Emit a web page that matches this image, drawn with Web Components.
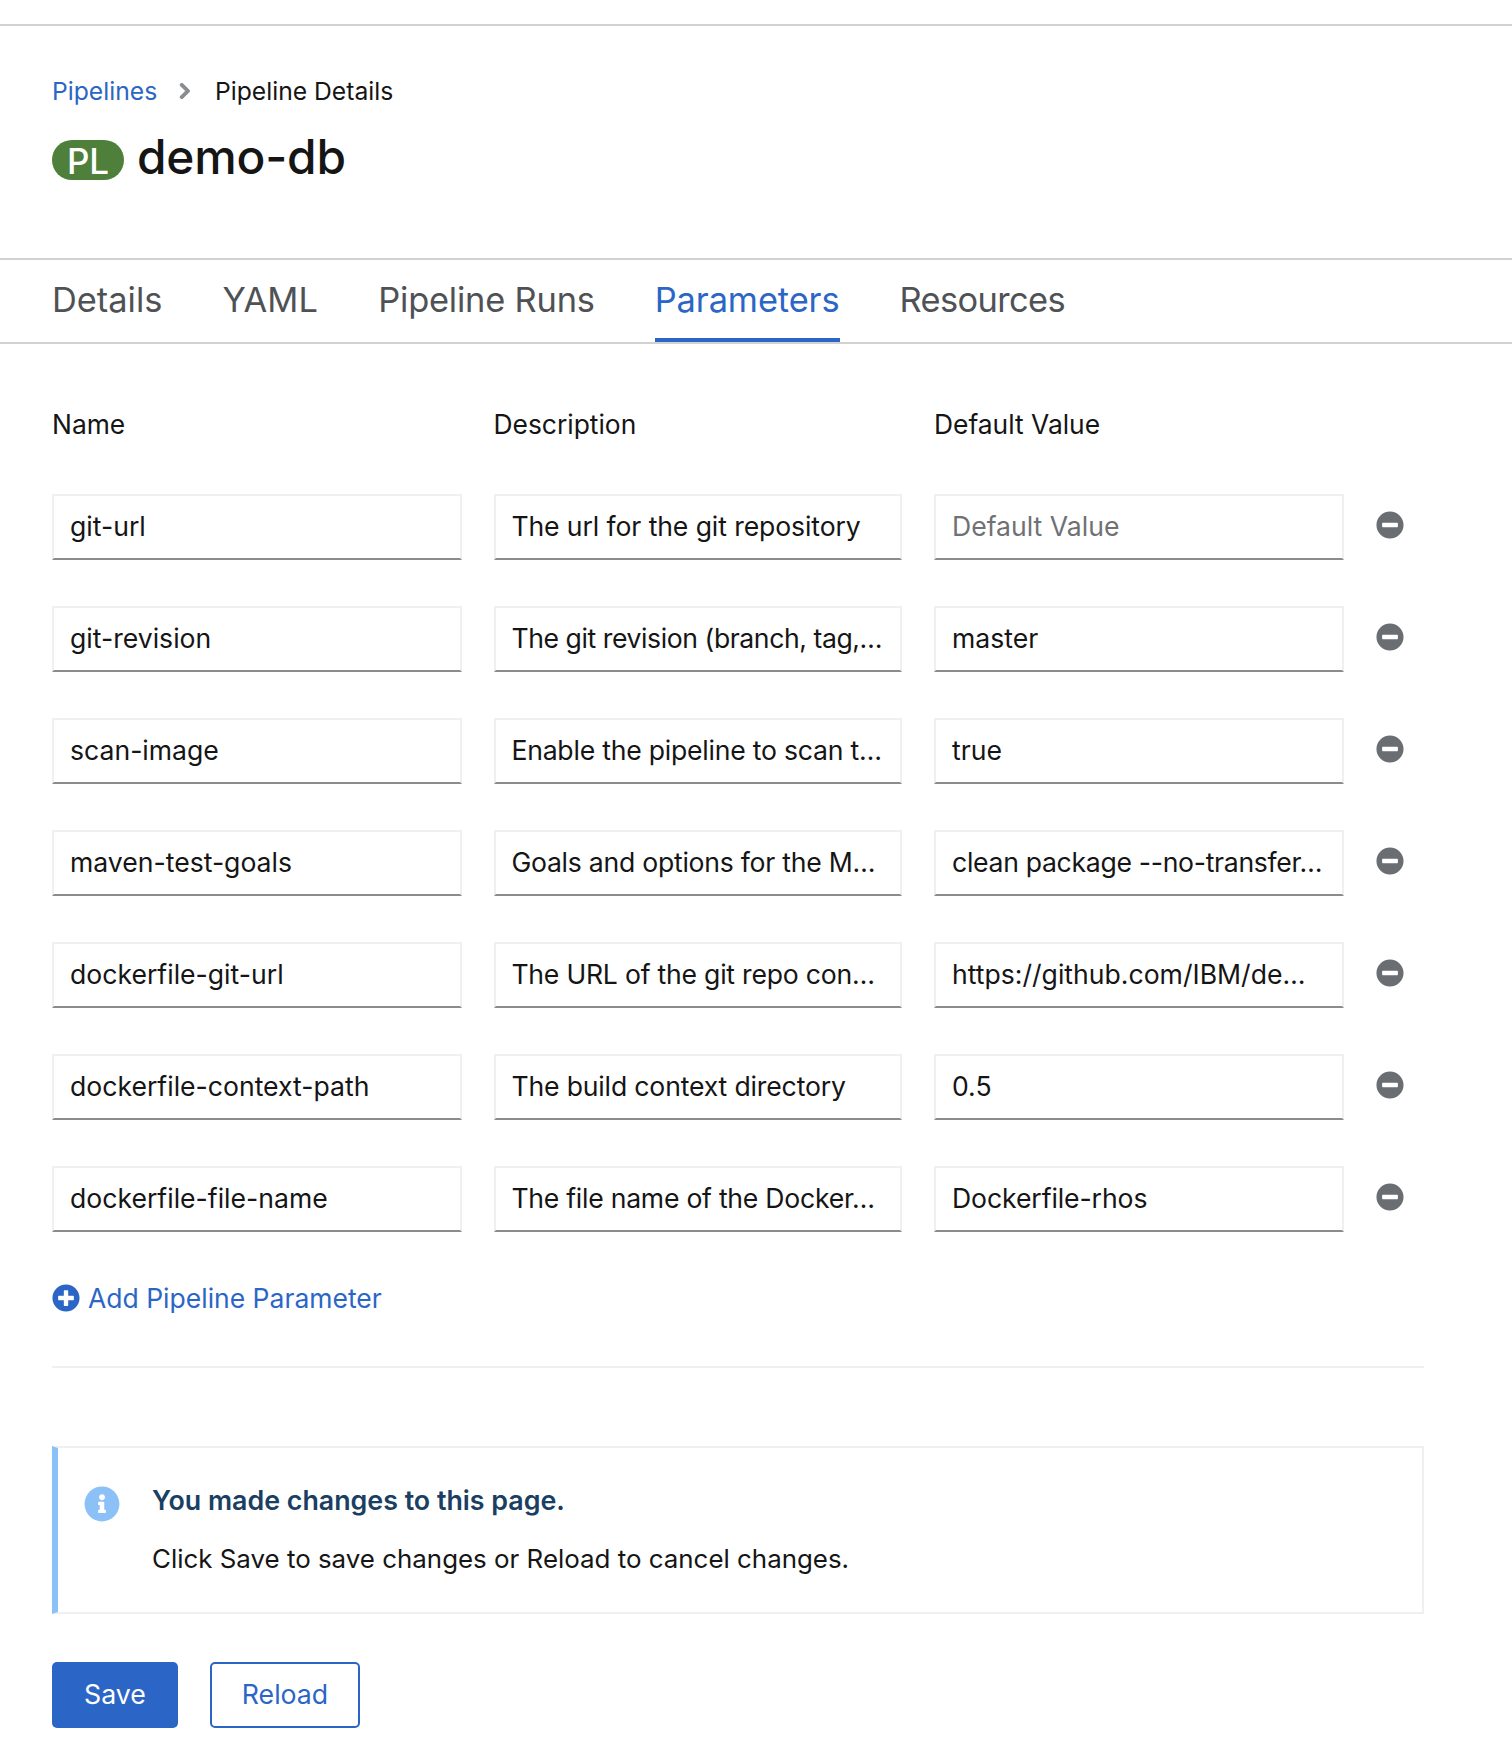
<!DOCTYPE html><html><head><meta charset="utf-8"><style>
html,body{margin:0;background:#fff}
body{font-family:Inter,"Liberation Sans",sans-serif;color:#151515;height:1756px;overflow:hidden}
</style></head><body>
<pipeline-page>
  <page-header slot="header" crumb="Pipelines" current="Pipeline Details" badge="PL" title="demo-db"></page-header>
  <tab-bar slot="tabs">
    <tab-item>Details</tab-item><tab-item style="--ls:.2px">YAML</tab-item><tab-item style="--ls:-.2px">Pipeline Runs</tab-item><tab-item active style="--ls:-.1px">Parameters</tab-item><tab-item style="--ls:-.6px">Resources</tab-item>
  </tab-bar>
  <param-form slot="form">
    <param-row name="git-url" desc="The url for the git repository" placeholder="Default Value" dls="-.1"></param-row>
    <param-row name="git-revision" desc="The git revision (branch, tag,…" value="master" dls="-.42"></param-row>
    <param-row name="scan-image" desc="Enable the pipeline to scan t…" value="true" dls="-.22"></param-row>
    <param-row name="maven-test-goals" desc="Goals and options for the M…" value="clean package --no-transfer…" dls="-.25" vls="-.3"></param-row>
    <param-row name="dockerfile-git-url" desc="The URL of the git repo con…" value="https://github.com/IBM/de…" dls="-.22"></param-row>
    <param-row name="dockerfile-context-path" desc="The build context directory" value="0.5" dls="-.16"></param-row>
    <param-row name="dockerfile-file-name" desc="The file name of the Docker…" value="Dockerfile-rhos" dls="-.25" vls="-.1"></param-row>
  </param-form>
  <info-alert slot="alert" heading="You made changes to this page.">Click Save to save changes or Reload to cancel changes.</info-alert>
  <action-button slot="actions" primary>Save</action-button>
  <action-button slot="actions">Reload</action-button>
</pipeline-page>
<script>
const P={
 minus:'M256 8C119 8 8 119 8 256s111 248 248 248 248-111 248-248S393 8 256 8zM124 296c-6.6 0-12-5.4-12-12v-56c0-6.6 5.4-12 12-12h264c6.6 0 12 5.4 12 12v56c0 6.6-5.4 12-12 12H124z',
 plus:'M256 8C119 8 8 119 8 256s111 248 248 248 248-111 248-248S393 8 256 8zm144 276c0 6.6-5.4 12-12 12h-92v92c0 6.6-5.4 12-12 12h-56c-6.6 0-12-5.4-12-12v-92h-92c-6.6 0-12-5.4-12-12v-56c0-6.6 5.4-12 12-12h92v-92c0-6.6 5.4-12 12-12h56c6.6 0 12 5.4 12 12v92h92c6.6 0 12 5.4 12 12v56z',
 info:'M256 8C119.043 8 8 119.083 8 256c0 136.997 111.043 248 248 248s248-111.003 248-248C504 119.083 392.957 8 256 8zm0 110c23.196 0 42 18.804 42 42s-18.804 42-42 42-42-18.804-42-42 18.804-42 42-42zm56 254c0 6.627-5.373 12-12 12h-88c-6.627 0-12-5.373-12-12v-24c0-6.627 5.373-12 12-12h12v-64h-12c-6.627 0-12-5.373-12-12v-24c0-6.627 5.373-12 12-12h64c6.627 0 12 5.373 12 12v100h12c6.627 0 12 5.373 12 12v24z'
};
const icon=(n,s,c)=>`<svg width="${s}" height="${s}" viewBox="0 0 512 512" fill="${c}" style="display:block;flex:none"><path d="${P[n]}"/></svg>`;
const COLS='410px 408px 410px 48px';
class Base extends HTMLElement{
  constructor(){super();this.attachShadow({mode:'open'})}
  connectedCallback(){this.shadowRoot.innerHTML=this.render()}
}
customElements.define('pipeline-page',class extends Base{render(){return `<style>
:host{display:block}
.top{height:24px;border-bottom:2px solid #d2d2d2}
.content{padding:0 88px 0 52px}
.actions{display:flex;gap:32px;margin-top:48px}
</style>
<div class="top"></div>
<slot name="header"></slot><slot name="tabs"></slot>
<div class="content"><slot name="form"></slot><slot name="alert"></slot><div class="actions"><slot name="actions"></slot></div></div>`}});
customElements.define('page-header',class extends Base{render(){const a=k=>this.getAttribute(k);return `<style>
:host{display:block;height:232px;box-sizing:border-box;padding:47px 52px 0}
nav{display:flex;align-items:center;height:36px;font-size:24.7px}
a{color:#2b66c6;text-decoration:none}
svg{margin:0 24px 0 22px;display:block;flex:none}
.t{display:flex;align-items:center;margin-top:19px;height:58px}
.b{width:72px;height:40px;box-sizing:border-box;padding-top:2px;border-radius:20px;background:#4e7f3b;color:#fff;font-size:35px;font-weight:500;display:flex;align-items:center;justify-content:center;margin-top:6px;margin-right:13px}
h1{margin:0;font-size:47.8px;font-weight:500;line-height:58px;letter-spacing:-.2px}
</style><nav><a>${a('crumb')}</a><svg width="11.7" height="18" viewBox="0 0 320 512" fill="#8a8d90"><path stroke="#8a8d90" stroke-width="30" stroke-linejoin="round" d="M285.476 272.971L91.132 467.314c-9.373 9.373-24.569 9.373-33.941 0l-22.667-22.667c-9.357-9.357-9.375-24.522-.04-33.901L188.505 256 34.484 101.255c-9.335-9.379-9.317-24.544.04-33.901l22.667-22.667c9.373-9.373 24.569-9.373 33.941 0L285.475 239.03c9.373 9.372 9.373 24.568.001 33.941z"/></svg><span>${a('current')}</span></nav>
<div class="t"><span class="b">${a('badge')}</span><h1>${a('title')}</h1></div>`}});
customElements.define('tab-bar',class extends Base{render(){return `<style>
:host{display:flex;gap:60px;height:86px;box-sizing:border-box;padding:0 52px;border-top:2px solid #d2d2d2;border-bottom:2px solid #d2d2d2}
</style><slot></slot>`}});
customElements.define('tab-item',class extends Base{render(){const on=this.hasAttribute('active');return `<style>
:host{display:block;box-sizing:border-box;height:82px;font-size:34.4px;line-height:79px;letter-spacing:var(--ls,0);color:${on?'#2b66c6':'#4f5255'};${on?'box-shadow:inset 0 -4px 0 #2b66c6;':''}white-space:nowrap}
</style><slot></slot>`}});
customElements.define('param-form',class extends Base{render(){return `<style>
:host{display:block}
.g{display:grid;grid-template-columns:${COLS};column-gap:32px}
.h{font-size:26.4px;line-height:36px;padding-top:62px;height:88px;box-sizing:content-box;color:#151515}
.h span:nth-child(2){margin-left:-.5px}
.rows{display:flex;flex-direction:column;gap:46px}
.add{display:flex;align-items:center;gap:8px;margin-top:48px;height:36px;color:#2b66c6;font-size:26.5px;line-height:36px}
hr{border:0;height:2px;background:#f0f0f0;margin:50px 0 0}
</style><div class="g h"><span>Name</span><span>Description</span><span>Default Value</span></div>
<div class="rows"><slot></slot></div>
<div class="add">${icon('plus',28,'#2b66c6')}<span>Add Pipeline Parameter</span></div><hr>`}});
customElements.define('text-field',class extends Base{render(){const ph=this.hasAttribute('placeholder');return `<style>
:host{display:block;box-sizing:border-box;height:66px;border:2px solid #f0f0f0;border-bottom-color:#8a8d90;padding:0 var(--pr,16px) 0 var(--pl,16px);font-size:26.6px;line-height:60px;letter-spacing:var(--ls,0);color:${ph?'#6f7175':'#151515'};white-space:nowrap;overflow:hidden;min-width:0}
</style><slot></slot>`}});
customElements.define('param-row',class extends Base{render(){const a=k=>this.getAttribute(k)||'';const v=a('value')||a('placeholder');return `<style>
:host{display:grid;grid-template-columns:${COLS};column-gap:32px;align-items:center}
.i{display:block;transform:translateY(-2px)}
</style><text-field>${a('name')}</text-field><text-field style="--pl:15.4px;--ls:${a('dls')||0}px">${a('desc')}</text-field><text-field style="--ls:${a('vls')||0}px" ${a('value')?'':'placeholder'}>${v}</text-field><span class="i">${icon('minus',28,'#6a6e73')}</span>`}});
customElements.define('info-alert',class extends Base{render(){return `<style>
:host{display:flex;box-sizing:border-box;height:168px;margin-top:78px;border:2px solid #f0f0f0;border-left:6px solid #8bc1f7;padding:33.5px 30px 0 26px;gap:32px}
svg{margin-top:4.5px}
.h{font-size:26.8px;line-height:36px;font-weight:600;color:#1b3f63}
.b{font-size:25.9px;line-height:36px;margin-top:23px;color:#151515}
</style>${icon('info',36,'#8bc1f7')}<div><div class="h">${this.getAttribute('heading')}</div><div class="b"><slot></slot></div></div>`}});
customElements.define('action-button',class extends Base{render(){const p=this.hasAttribute('primary');return `<style>
:host{display:flex;align-items:center;justify-content:center;box-sizing:border-box;height:66px;padding-bottom:3px;width:${p?126:150}px;border-radius:5px;font-size:26.7px;${p?'background:#2b66c6;color:#fff;':'background:#fff;color:#2b66c6;border:2px solid #2b66c6;'}}
</style><slot></slot>`}});
</script></body></html>
